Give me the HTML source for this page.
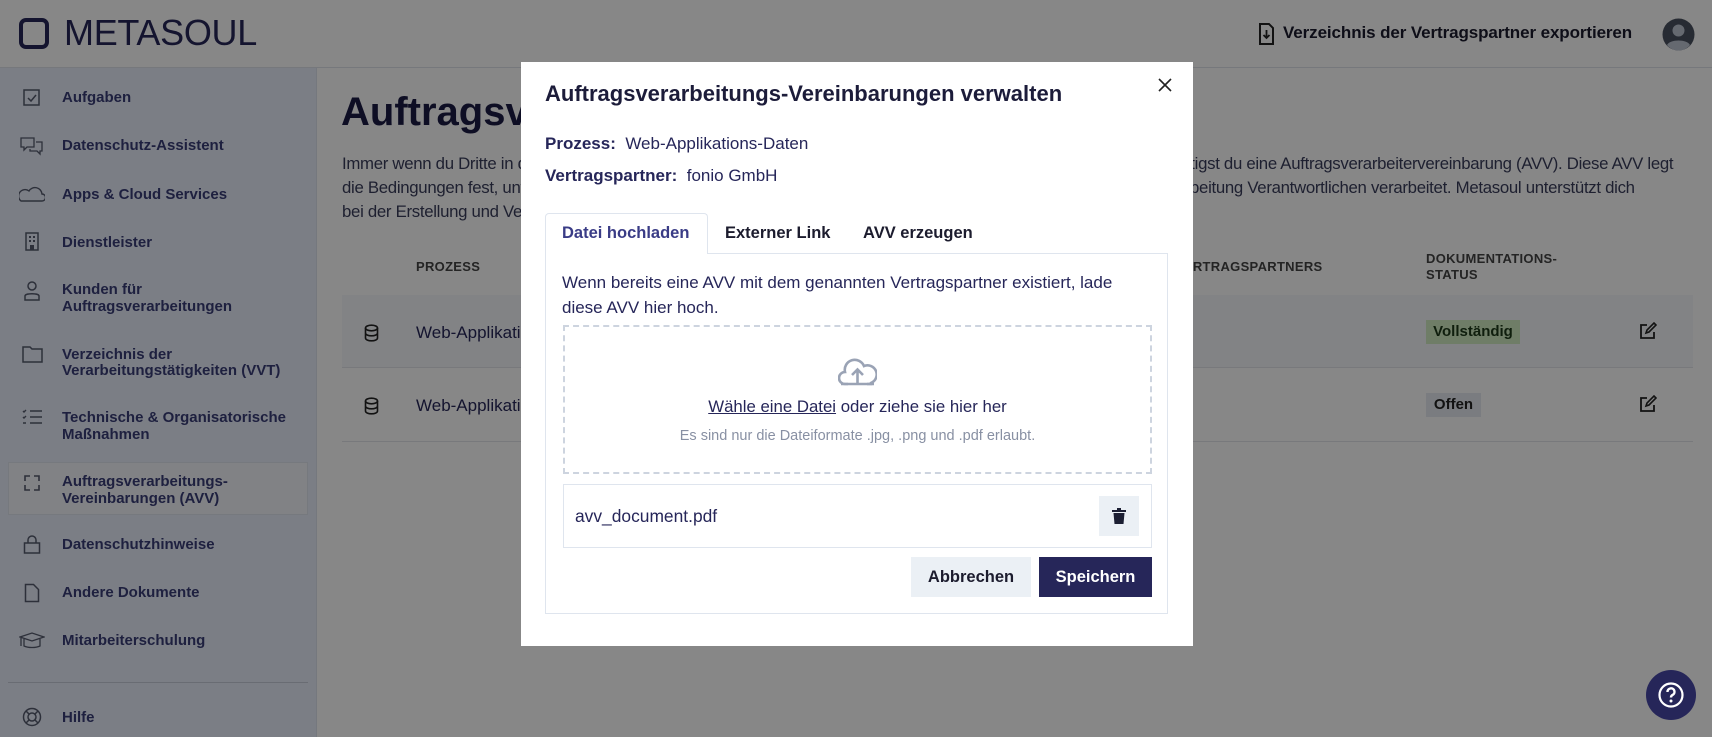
<!DOCTYPE html>
<html><head><meta charset="utf-8"><style>
*{box-sizing:border-box;margin:0;padding:0}
body{width:1712px;height:737px;overflow:hidden;position:relative;font-family:"Liberation Sans",sans-serif;background:#fff;color:#262659}
.a{position:absolute;white-space:nowrap}
.hdr{left:0;top:0;width:1712px;height:68px;background:#fff;border-bottom:1px solid #dfe3ea}
.side{left:0;top:68px;width:317px;height:669px;background:#e9eefb;border-right:1px solid #dde3ee}
.si{font-size:15px;font-weight:bold;color:#393e78;line-height:17px;left:62px}
.ov{left:0;top:0;width:1712px;height:737px;background:rgba(0,0,0,0.47)}
.modal{left:521px;top:62px;width:672px;height:584px;background:#fff}
.m{color:#262659}
</style></head><body>
<div class="a hdr"></div>
<div class="a" style="left:19px;top:18px;width:30px;height:31px;border:4px solid #262659;border-radius:7px"></div>
<div class="a" style="left:64px;top:12px;font-size:36px;line-height:42px;color:#262659;letter-spacing:-0.3px">METASOUL</div>
<svg class="a" style="left:1258px;top:23px" width="17" height="22" viewBox="0 0 17 22"><path d="M2 1h9l4 4v16H2z" fill="none" stroke="#222" stroke-width="2"/><path d="M8.5 7v8M5.5 12l3 3 3-3" fill="none" stroke="#222" stroke-width="1.8"/></svg>
<div class="a" style="left:1283px;top:23px;font-size:17px;font-weight:bold;color:#1c1c2e;letter-spacing:-0.1px">Verzeichnis der Vertragspartner exportieren</div>
<svg class="a" style="left:1662px;top:18px" width="33" height="33" viewBox="0 0 33 33"><circle cx="16.5" cy="16.5" r="16" fill="#4b5260"/><circle cx="16.5" cy="12.5" r="6" fill="#bfc6d4"/><path d="M5 27c3-6 20-6 23 0c-3 4-8 5.5-11.5 5.5S8 31 5 27z" fill="#bfc6d4"/></svg>

<div class="a side"></div>
<div class="a" style="left:8px;top:462px;width:300px;height:53px;background:#f4f6fb;border:1px solid #dfe4ee"></div>
<div class="a" style="left:8px;top:682px;width:300px;height:1px;background:#c6ccd9"></div>
<svg class="a" style="left:22px;top:88px" width="20" height="20"><rect x="2" y="2" width="15" height="15" fill="none" stroke="#555b6e" stroke-width="1.5"/><path d="M6 10l3 3 5-6" fill="none" stroke="#555b6e" stroke-width="1.5"/></svg>
<div class="a si" style="top:89px">Aufgaben</div>
<svg class="a" style="left:19px;top:136px" width="26" height="20"><path d="M2 2h13v9H8l-3 3v-3H2z M17 6h6v9h-2v3l-3-3h-7v-2" fill="none" stroke="#555b6e" stroke-width="1.3"/></svg>
<div class="a si" style="top:137px">Datenschutz-Assistent</div>
<svg class="a" style="left:19px;top:185px" width="26" height="18"><path d="M2 16h21a3 3 0 0 0 0-7 7 7 0 0 0-13-3 5 5 0 0 0-8 10z" fill="none" stroke="#555b6e" stroke-width="1.4"/></svg>
<div class="a si" style="top:186px">Apps &amp; Cloud Services</div>
<svg class="a" style="left:24px;top:232px" width="16" height="20"><rect x="2" y="1" width="12" height="17" fill="none" stroke="#555b6e" stroke-width="1.5"/><path d="M5 4h2v2H5zM9 4h2v2H9zM5 8h2v2H5zM9 8h2v2H9zM6 13h4v5H6z" fill="#555b6e"/></svg>
<div class="a si" style="top:234px">Dienstleister</div>
<svg class="a" style="left:22px;top:280px" width="20" height="22"><circle cx="10" cy="6" r="4" fill="none" stroke="#555b6e" stroke-width="1.5"/><path d="M3 20v-4c0-3 14-3 14 0v4z" fill="none" stroke="#555b6e" stroke-width="1.5"/></svg>
<div class="a si" style="top:281px">Kunden für</div>
<div class="a si" style="top:298px">Auftragsverarbeitungen</div>
<svg class="a" style="left:22px;top:345px" width="21" height="18"><path d="M1 2h7l2 2h10v13H1z" fill="none" stroke="#555b6e" stroke-width="1.5"/></svg>
<div class="a si" style="top:346px">Verzeichnis der</div>
<div class="a si" style="top:362px">Verarbeitungstätigkeiten (VVT)</div>
<svg class="a" style="left:22px;top:409px" width="21" height="16"><path d="M8 2h12M8 8h12M8 14h12M1 2l1 1 2-2M1 8l1 1 2-2M1 14h3" fill="none" stroke="#555b6e" stroke-width="1.4"/></svg>
<div class="a si" style="top:409px">Technische &amp; Organisatorische</div>
<div class="a si" style="top:426px">Maßnahmen</div>
<svg class="a" style="left:23px;top:474px" width="18" height="18"><path d="M2 7V2h5M11 2h5v5M16 11v5h-5M7 16H2v-5" fill="none" stroke="#555b6e" stroke-width="1.6"/></svg>
<div class="a si" style="top:473px">Auftragsverarbeitungs-</div>
<div class="a si" style="top:490px">Vereinbarungen (AVV)</div>
<svg class="a" style="left:23px;top:535px" width="18" height="19"><rect x="1.5" y="8" width="15" height="10" fill="none" stroke="#555b6e" stroke-width="1.5"/><path d="M5 8V5a4 4 0 0 1 8 0v3" fill="none" stroke="#555b6e" stroke-width="1.5"/></svg>
<div class="a si" style="top:536px">Datenschutzhinweise</div>
<svg class="a" style="left:24px;top:583px" width="16" height="20"><path d="M1.5 1.5h8l5 5v12h-13z" fill="none" stroke="#555b6e" stroke-width="1.5"/></svg>
<div class="a si" style="top:584px">Andere Dokumente</div>
<svg class="a" style="left:19px;top:631px" width="26" height="18"><path d="M1 6l12-4 12 4-12 4zM5 8v7c4 2 12 2 16 0V8M2 7v8" fill="none" stroke="#555b6e" stroke-width="1.3"/></svg>
<div class="a si" style="top:632px">Mitarbeiterschulung</div>
<svg class="a" style="left:22px;top:707px" width="20" height="20"><circle cx="10" cy="10" r="8.5" fill="none" stroke="#555b6e" stroke-width="1.5"/><circle cx="10" cy="10" r="4" fill="none" stroke="#555b6e" stroke-width="1.5"/><path d="M4 4l3 3M16 4l-3 3M4 16l3-3M16 16l-3-3" stroke="#555b6e" stroke-width="1.5"/></svg>
<div class="a si" style="top:709px">Hilfe</div>

<div class="a" style="left:341px;top:90px;font-size:40px;font-weight:bold;color:#1c1c45">Auftragsverarbeitungs-Vereinbarungen</div>
<div class="a" style="left:342px;top:152px;font-size:16.8px;line-height:24px;color:#3a3d5c;letter-spacing:-0.3px">Immer wenn du Dritte in deine Verarbeitungen personenbezogener Daten einbeziehst, zum Beispiel Dienstleister, benötigst du eine Auftragsverarbeitervereinbarung (AVV). Diese AVV legt<br>die Bedingungen fest, unter welchen der Dienstleister die personenbezogenen Daten im Auftrag des für die Datenverarbeitung Verantwortlichen verarbeitet. Metasoul unterstützt dich<br>bei der Erstellung und Verwaltung deiner Auftragsverarbeitungs-Vereinbarungen.</div>
<div class="a" style="left:416px;top:259px;font-size:13px;font-weight:bold;color:#444;letter-spacing:.3px">PROZESS</div>
<div class="a" style="left:1100px;top:259px;font-size:13px;font-weight:bold;color:#444;letter-spacing:.3px">NAME DES VERTRAGSPARTNERS</div>
<div class="a" style="left:1426px;top:251px;font-size:13px;font-weight:bold;color:#444;letter-spacing:.3px;line-height:16px">DOKUMENTATIONS-<br>STATUS</div>
<div class="a" style="left:342px;top:295px;width:1351px;height:73px;background:#f6f8fc;border-bottom:1px solid #e2e5ea"></div>
<div class="a" style="left:342px;top:441px;width:1351px;height:1px;background:#e2e5ea"></div>
<svg class="a" style="left:364px;top:324px" width="15" height="18"><ellipse cx="7.5" cy="4" rx="6" ry="2.8" fill="none" stroke="#222" stroke-width="1.6"/><path d="M1.5 4v10c0 3.7 12 3.7 12 0V4M1.5 9c0 3.7 12 3.7 12 0" fill="none" stroke="#222" stroke-width="1.6"/></svg>
<svg class="a" style="left:364px;top:397px" width="15" height="18"><ellipse cx="7.5" cy="4" rx="6" ry="2.8" fill="none" stroke="#222" stroke-width="1.6"/><path d="M1.5 4v10c0 3.7 12 3.7 12 0V4M1.5 9c0 3.7 12 3.7 12 0" fill="none" stroke="#222" stroke-width="1.6"/></svg>
<div class="a" style="left:416px;top:323px;font-size:17px;color:#262659">Web-Applikations-Daten</div>
<div class="a" style="left:416px;top:396px;font-size:17px;color:#262659">Web-Applikations-Daten</div>
<div class="a" style="left:1426px;top:320px;width:94px;height:24px;background:#d2ecc2;font-size:15px;font-weight:bold;line-height:24px;text-align:center;color:#1d3a1a">Vollständig</div>
<div class="a" style="left:1426px;top:393px;width:55px;height:24px;background:#e7ebf1;font-size:15px;font-weight:bold;line-height:24px;text-align:center;color:#222">Offen</div>
<svg class="a" style="left:1639px;top:322px" width="18" height="18"><path d="M8 3H2v13h13v-6" fill="none" stroke="#222" stroke-width="1.8"/><path d="M7 11l1-3 7-7 2 2-7 7z" fill="none" stroke="#222" stroke-width="1.6"/></svg>
<svg class="a" style="left:1639px;top:395px" width="18" height="18"><path d="M8 3H2v13h13v-6" fill="none" stroke="#222" stroke-width="1.8"/><path d="M7 11l1-3 7-7 2 2-7 7z" fill="none" stroke="#222" stroke-width="1.6"/></svg>

<div class="a ov"></div>

<div class="a modal"></div>
<div class="a m" style="left:545px;top:81px;font-size:22px;font-weight:bold;color:#1c1c3a">Auftragsverarbeitungs-Vereinbarungen verwalten</div>
<svg class="a" style="left:1158px;top:78px" width="14" height="14"><path d="M1 1l12 12M13 1L1 13" stroke="#222" stroke-width="1.6"/></svg>
<div class="a m" style="left:545px;top:134px;font-size:17px"><b>Prozess:</b>&nbsp; Web-Applikations-Daten</div>
<div class="a m" style="left:545px;top:166px;font-size:17px"><b>Vertragspartner:</b>&nbsp; fonio GmbH</div>
<div class="a" style="left:545px;top:253px;width:623px;height:361px;border:1px solid #dfe5ee"></div>
<div class="a" style="left:545px;top:213px;width:163px;height:41px;background:#fff;border:1px solid #dfe5ee;border-bottom:none;border-radius:4px 4px 0 0"></div>
<div class="a" style="left:562px;top:224px;font-size:16.5px;font-weight:bold;color:#3a3c86">Datei hochladen</div>
<div class="a" style="left:725px;top:224px;font-size:16.5px;font-weight:bold;color:#1c1c2e">Externer Link</div>
<div class="a" style="left:863px;top:224px;font-size:16.5px;font-weight:bold;color:#1c1c2e">AVV erzeugen</div>
<div class="a m" style="left:562px;top:270px;font-size:17px;line-height:25px">Wenn bereits eine AVV mit dem genannten Vertragspartner existiert, lade<br>diese AVV hier hoch.</div>
<div class="a" style="left:563px;top:325px;width:589px;height:149px;border:2px dashed #cdd4df"></div>
<svg class="a" style="left:838px;top:356px" width="39" height="30" viewBox="0 0 39 30"><path d="M10 28H7a6 6 0 0 1 0-12 10 10 0 0 1 19-6 8 8 0 0 1 7 17v1h-4M19.5 28V14M14 19l5.5-5.5L25 19" fill="none" stroke="#9aa3b5" stroke-width="2.6"/><path d="M3 28h33" stroke="#9aa3b5" stroke-width="2.6"/></svg>
<div class="a m" style="left:563px;width:589px;text-align:center;top:397px;font-size:16.8px"><span style="text-decoration:underline">Wähle eine Datei</span> oder ziehe sie hier her</div>
<div class="a" style="left:563px;width:589px;text-align:center;top:428px;font-size:14.5px;color:#8890a3">Es sind nur die Dateiformate .jpg, .png und .pdf erlaubt.</div>
<div class="a" style="left:563px;top:484px;width:589px;height:64px;border:1px solid #dfe5ee"></div>
<div class="a m" style="left:575px;top:506px;font-size:17.4px">avv_document.pdf</div>
<div class="a" style="left:1099px;top:496px;width:40px;height:40px;background:#ebf0f5"></div>
<svg class="a" style="left:1111px;top:507px" width="16" height="18"><path d="M1 3h14v2H1zM6 1h4v2H6zM2.5 6h11l-1 11h-9z" fill="#1c1f33"/></svg>
<div class="a" style="left:911px;top:557px;width:120px;height:40px;background:#ebf0f5;font-size:16.5px;font-weight:bold;line-height:40px;text-align:center;color:#1c1c2e">Abbrechen</div>
<div class="a" style="left:1039px;top:557px;width:113px;height:40px;background:#262659;font-size:16.5px;font-weight:bold;line-height:40px;text-align:center;color:#fff">Speichern</div>

<div class="a" style="left:1646px;top:670px;width:50px;height:50px;border-radius:50%;background:#262659"></div>
<svg class="a" style="left:1657px;top:681px" width="28" height="28" viewBox="0 0 28 28"><circle cx="14" cy="14" r="11.5" fill="none" stroke="#fff" stroke-width="2.2"/><path d="M10.5 11a3.5 3.5 0 1 1 5 3c-1.2.6-1.5 1.2-1.5 2.5" fill="none" stroke="#fff" stroke-width="2.4"/><circle cx="14" cy="20" r="1.5" fill="#fff"/></svg>
</body></html>
